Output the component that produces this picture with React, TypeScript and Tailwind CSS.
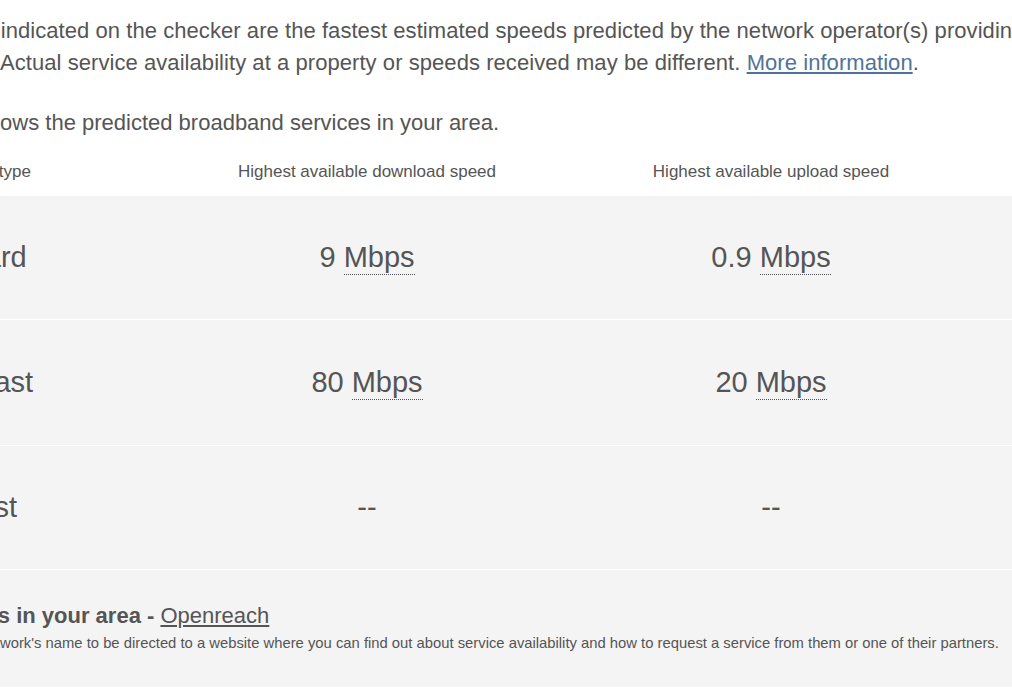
import React from 'react';

type Row = { name: string; download: string | null; upload: string | null };

const rows: Row[] = [
  { name: 'Standard', download: '9', upload: '0.9' },
  { name: 'Superfast', download: '80', upload: '20' },
  { name: 'Ultrafast', download: null, upload: null },
];

const Speed: React.FC<{ value: string | null }> = ({ value }) => {
  if (!value) return <span>--</span>;
  return (
    <span>
      {value}{' '}
      <abbr title="Megabits per second" className="no-underline border-b-[1.5px] border-dotted border-[#555] pb-[1px]">
        Mbps
      </abbr>
    </span>
  );
};

export default function App() {
  return (
    <div className="w-[1012px] h-[700px] overflow-hidden bg-white font-['Liberation_Sans',Arial,sans-serif] text-[#555]">
      <div className="w-[1400px] ml-[-121px] pt-[15px]">
        {/* Intro copy */}
        <p className="text-[22px] leading-[32px] whitespace-nowrap tracking-[0.06px]">
          The speeds indicated on the checker are the fastest estimated speeds predicted by the network operator(s) providing services
          <br />
          <span className="-ml-[7px]">in your area.</span> Actual service availability at a property or speeds received may be different.{' '}
          <a href="#" className="text-[#4f7398] underline underline-offset-2">More information</a>.
        </p>
        <p className="mt-[28px] text-[22px] leading-[32px] whitespace-nowrap">
          The table shows the predicted broadband services in your area.
        </p>

        {/* Speeds table */}
        <div className="mt-[21px] pl-[29px]">
          <div className="grid grid-cols-[257px_404px_404px_160px] text-[17px] leading-[24px] pb-[12px]">
            <div>Connection type</div>
            <div className="text-center">Highest available download speed</div>
            <div className="text-center">Highest available upload speed</div>
            <div className="text-center">Availability</div>
          </div>
        </div>
        <div className="bg-[#f4f4f4]">
          {rows.map((r, i) => (
            <div
              key={r.name}
              className={`grid grid-cols-[286px_404px_404px_160px] items-center border-b border-white text-[29px] ${
                i === 1 ? 'h-[126px]' : 'h-[124px]'
              }`}
            >
              <div className="pl-[30px]">{r.name}</div>
              <div className="text-center">
                <Speed value={r.download} />
              </div>
              <div className="text-center">
                <Speed value={r.upload} />
              </div>
              <div />
            </div>
          ))}

          {/* Other networks */}
          <div className="h-[117px] pl-[32px] pt-[32px]">
            <h3 className="text-[22px] leading-[28px] font-bold whitespace-nowrap">
              Networks in your area -{' '}
              <a href="#" className="font-normal underline underline-offset-2">Openreach</a>
            </h3>
            <p className="mt-[3px] -ml-[13px] text-[14.8px] leading-[20px] whitespace-nowrap">
              Click on the network's name to be directed to a website where you can find out about service availability and how to request a service from them or one of their partners.
            </p>
          </div>
        </div>
      </div>
    </div>
  );
}
